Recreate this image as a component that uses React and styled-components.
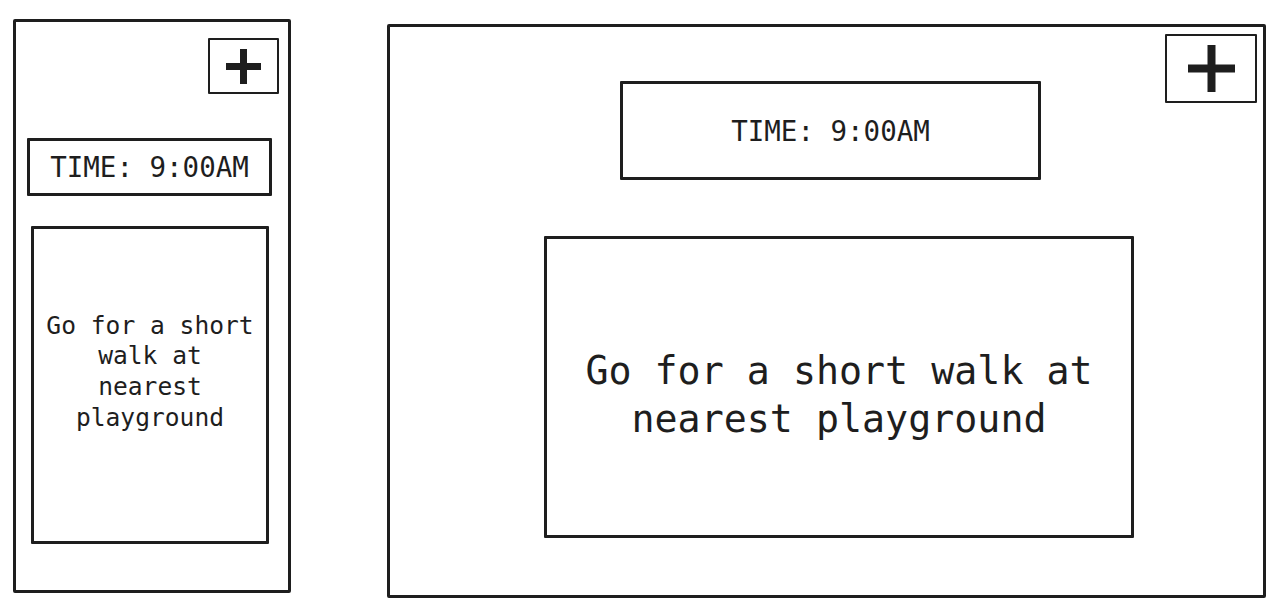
import React from "react";
import styled, { createGlobalStyle } from "styled-components";

const GlobalStyle = createGlobalStyle`
  body {
    margin: 0;
    background: #ffffff;
    font-family: "DejaVu Sans Mono", "Liberation Mono", monospace;
    color: #1e1e1e;
  }
`;

const Canvas = styled.div`
  width: 1280px;
  height: 612px;
  display: flex;
  align-items: flex-start;
  gap: 96px;
  padding-left: 13px;
  box-sizing: border-box;
  overflow: hidden;
`;

const Frame = styled.div`
  position: relative;
  box-sizing: border-box;
  width: ${(p) => p.$w}px;
  height: ${(p) => p.$h}px;
  margin-top: ${(p) => p.$top}px;
  border: 3px solid #1e1e1e;
  border-radius: 2px;
  display: flex;
  flex-direction: column;
  align-items: flex-start;
  padding-top: ${(p) => p.$pad}px;
`;

const AddButton = styled.button`
  box-sizing: border-box;
  width: ${(p) => p.$w}px;
  height: ${(p) => p.$h}px;
  border: 2px solid #1e1e1e;
  border-radius: 1px;
  background: #fff;
  padding: 0;
  display: flex;
  align-items: center;
  justify-content: center;
  cursor: pointer;
  align-self: flex-end;
  margin-right: ${(p) => p.$right}px;
`;

const FloatingAdd = styled(AddButton)`
  position: absolute;
  top: 7px;
  right: 6px;
  margin: 0;
`;

const TimeBox = styled.div`
  box-sizing: border-box;
  width: ${(p) => p.$w}px;
  height: ${(p) => p.$h}px;
  margin-left: ${(p) => p.$left}px;
  margin-top: ${(p) => p.$top}px;
  border: 3px solid #1e1e1e;
  border-radius: 1px;
  display: flex;
  align-items: center;
  justify-content: center;
  font-size: 27.5px;
`;

const TaskCard = styled.div`
  box-sizing: border-box;
  width: ${(p) => p.$w}px;
  height: ${(p) => p.$h}px;
  margin-left: ${(p) => p.$left}px;
  margin-top: ${(p) => p.$top}px;
  border: 3px solid #1e1e1e;
  border-radius: 1px;
  display: flex;
  align-items: center;
  justify-content: center;
  text-align: center;
  padding: ${(p) => p.$pad};
  font-size: ${(p) => p.$size}px;
  line-height: 1.25;
`;

function PlusIcon({ size, thick }) {
  const h = size;
  return (
    <svg width={size} height={h} viewBox={`0 0 ${size} ${h}`}>
      <rect x="0" y={(h - thick) / 2} width={size} height={thick} fill="#1e1e1e" />
      <rect x={(size - thick) / 2} y="0" width={thick} height={h} fill="#1e1e1e" />
    </svg>
  );
}

export default function App() {
  const task = "Go for a short walk at nearest playground";
  return (
    <>
      <GlobalStyle />
      <Canvas>
        <Frame $w={278} $h={574} $top={19} $pad={16}>
          <AddButton $w={71} $h={56} $right={9} aria-label="Add">
            <PlusIcon size={35} thick={7} />
          </AddButton>
          <TimeBox $w={245} $h={58} $left={11} $top={44}>
            TIME: 9:00AM
          </TimeBox>
          <TaskCard $w={238} $h={318} $left={15} $top={30} $pad="0 10px 26px" $size={24.6}>
            {task}
          </TaskCard>
        </Frame>

        <Frame $w={879} $h={574} $top={24} $pad={0}>
          <FloatingAdd $w={92} $h={69} aria-label="Add">
            <PlusIcon size={47} thick={8} />
          </FloatingAdd>
          <TimeBox $w={421} $h={99} $left={230} $top={54}>
            TIME: 9:00AM
          </TimeBox>
          <TaskCard $w={590} $h={302} $left={154} $top={56} $pad="16px 30px 0" $size={38.3}>
            {task}
          </TaskCard>
        </Frame>
      </Canvas>
    </>
  );
}
